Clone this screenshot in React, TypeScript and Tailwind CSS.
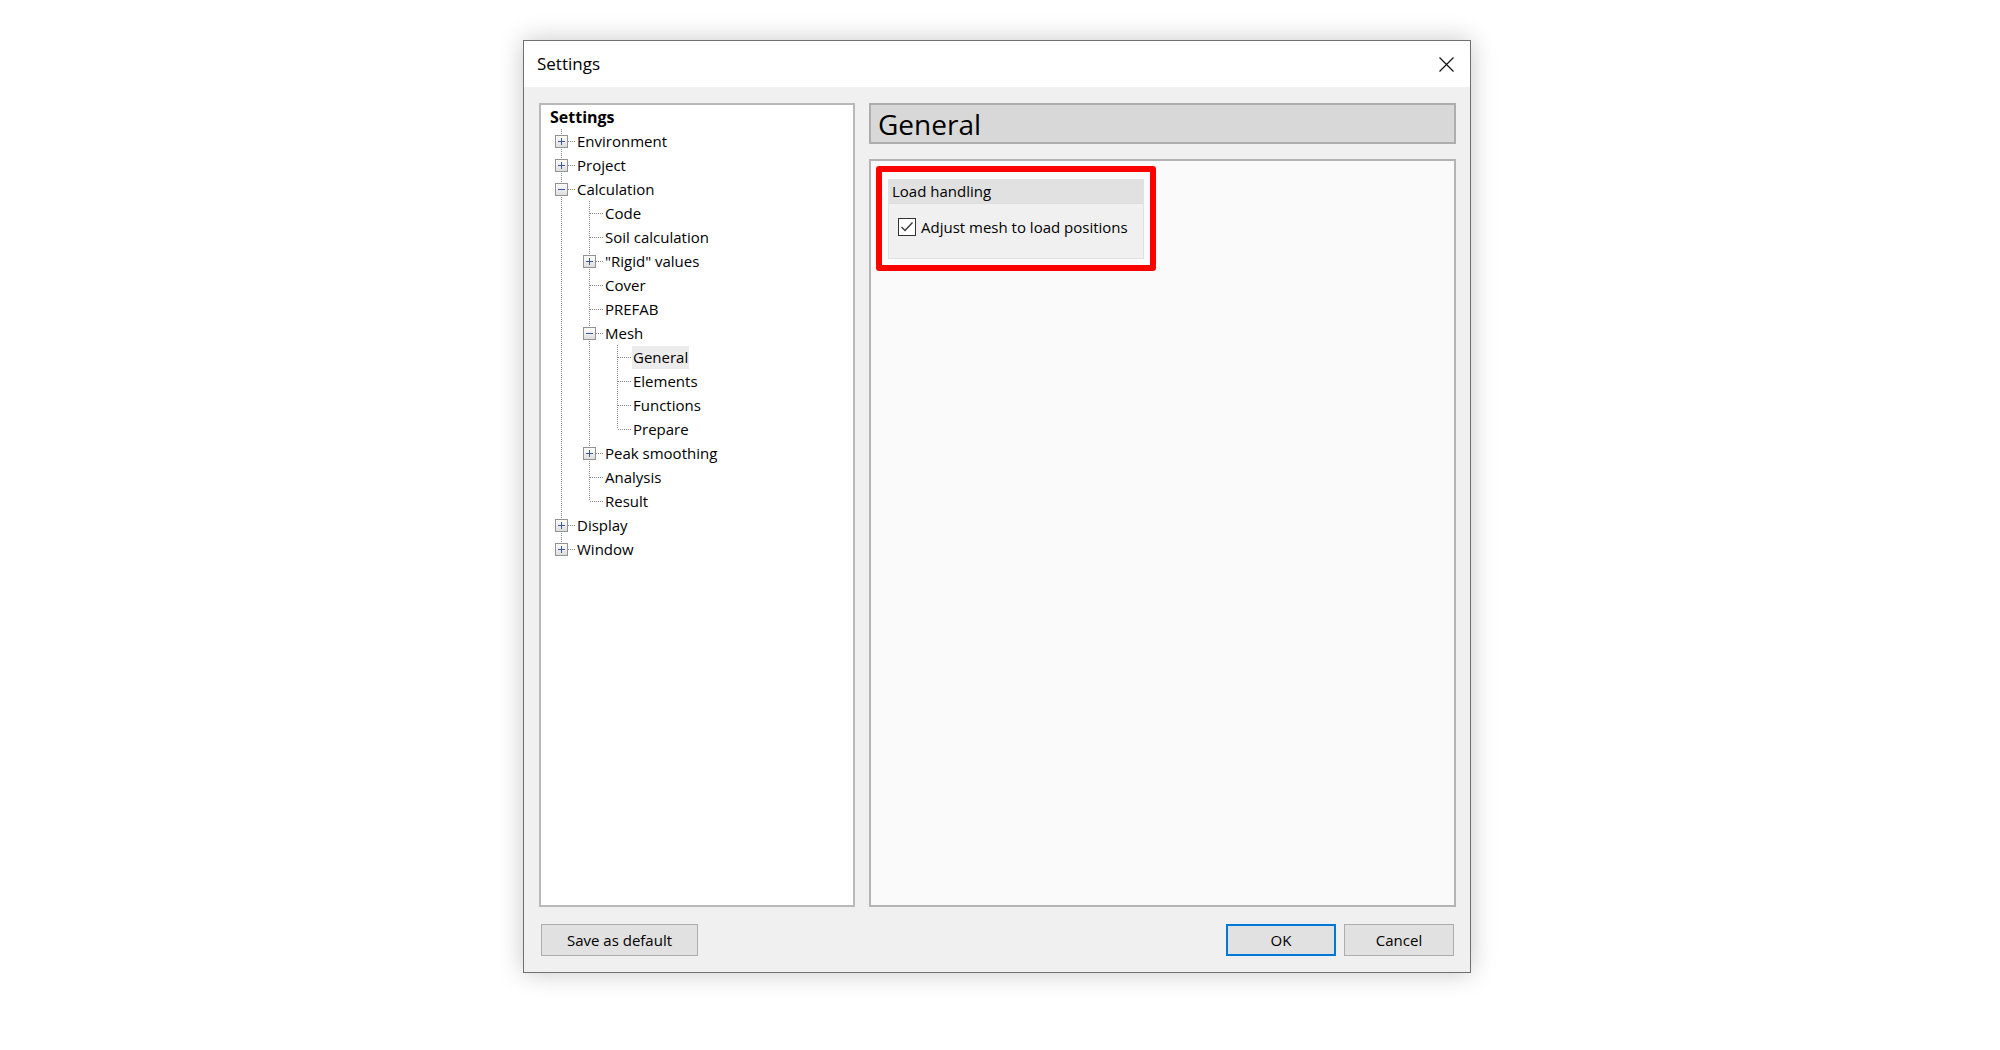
import React from "react";

type Node = {
  label: string;
  level: number;
  box?: "plus" | "minus";
  last?: boolean;
  anc: boolean[];
  selected?: boolean;
};

const tree: Node[] = [
  { label: "Environment", level: 1, box: "plus", anc: [] },
  { label: "Project", level: 1, box: "plus", anc: [] },
  { label: "Calculation", level: 1, box: "minus", anc: [] },
  { label: "Code", level: 2, anc: [true] },
  { label: "Soil calculation", level: 2, anc: [true] },
  { label: "\"Rigid\" values", level: 2, box: "plus", anc: [true] },
  { label: "Cover", level: 2, anc: [true] },
  { label: "PREFAB", level: 2, anc: [true] },
  { label: "Mesh", level: 2, box: "minus", anc: [true] },
  { label: "General", level: 3, anc: [true, true], selected: true },
  { label: "Elements", level: 3, anc: [true, true] },
  { label: "Functions", level: 3, anc: [true, true] },
  { label: "Prepare", level: 3, anc: [true, true], last: true },
  { label: "Peak smoothing", level: 2, box: "plus", anc: [true] },
  { label: "Analysis", level: 2, anc: [true] },
  { label: "Result", level: 2, anc: [true], last: true },
  { label: "Display", level: 1, box: "plus", anc: [] },
  { label: "Window", level: 1, box: "plus", last: true, anc: [] },
];

const dot = { stroke: "#8c8c8c", strokeWidth: 1, strokeDasharray: "1 1" };

const Guide = ({ on }: { on: boolean }) => (
  <svg width="28" height="24" className="shrink-0" shapeRendering="crispEdges">
    {on && <line x1="14.5" y1="0" x2="14.5" y2="24" style={dot} />}
  </svg>
);

const Branch = ({ box, last }: { box?: "plus" | "minus"; last?: boolean }) => (
  <svg width="28" height="24" className="shrink-0" shapeRendering="crispEdges">
    <defs>
      <linearGradient id="bx" x1="0" y1="0" x2="0" y2="1">
        <stop offset="0" stopColor="#ffffff" />
        <stop offset="1" stopColor="#dcdcdc" />
      </linearGradient>
    </defs>
    <line x1="14.5" y1="0" x2="14.5" y2={last ? 12 : 24} style={dot} />
    <line x1="15" y1="12.5" x2="28" y2="12.5" style={dot} />
    {box && (
      <>
        <rect x="8.5" y="6.5" width="12" height="12" fill="url(#bx)" stroke="#939393" />
        <line x1="11" y1="12.5" x2="18" y2="12.5" stroke="#3b5b98" strokeWidth="1" />
        {box === "plus" && <line x1="14.5" y1="9" x2="14.5" y2="16" stroke="#3b5b98" strokeWidth="1" />}
      </>
    )}
  </svg>
);

const TreeRow = ({ node }: { node: Node }) => (
  <div className="flex h-[24px] items-center">
    {node.anc.map((on, i) => (
      <Guide key={i} on={on} />
    ))}
    <Branch box={node.box} last={node.last} />
    <span
      className={`ml-[1px] px-[1px] h-[23px] leading-[22px] whitespace-nowrap ${
        node.selected ? "bg-[#ececec]" : ""
      }`}
    >
      {node.label}
    </span>
  </div>
);

const Button = ({ children, primary, className }: any) => (
  <button
    className={`h-[32px] bg-[#e1e1e1] text-[15px] text-black ${
      primary ? "border-2 border-[#0078d7]" : "border border-[#adadad]"
    } ${className}`}
  >
    {children}
  </button>
);

const App = () => {
  return (
    <div
      className="w-[2000px] h-[1050px] bg-white pl-[523px] pt-[40px] text-black"
      style={{ fontFamily: '"Open Sans", "Noto Sans", sans-serif' }}
    >
      <div className="w-[948px] h-[933px] flex flex-col border border-[#707070] bg-[#f0f0f0] shadow-[0_0_24px_rgba(0,0,0,0.22)]">
        {/* title bar */}
        <div className="h-[46px] shrink-0 bg-white flex items-center justify-between pl-[13px] pr-[16px]">
          <span className="text-[17px]">Settings</span>
          <svg width="15" height="15" viewBox="0 0 15 15">
            <path d="M0.5 0.5 L14.5 14.5 M14.5 0.5 L0.5 14.5" stroke="#111" strokeWidth="1.2" />
          </svg>
        </div>

        {/* body */}
        <div className="flex-1 flex flex-col pt-[16px] pl-[15px] pr-[14px] pb-[16px]">
          <div className="flex-1 flex gap-[14px] min-h-0">
            {/* tree */}
            <div className="w-[316px] border-2 border-[#b9b9b9] bg-white pl-[6px] text-[15px]">
              <div className="h-[24px] flex items-center pl-[3px] font-bold text-[16px]">Settings</div>
              {tree.map((n, i) => (
                <TreeRow key={i} node={n} />
              ))}
            </div>

            {/* right column */}
            <div className="flex-1 flex flex-col gap-[15px]">
              <div className="h-[41px] shrink-0 border-2 border-[#adadad] bg-[#d8d8d8] flex items-center pl-[7px]">
                <span className="text-[28px] leading-none">General</span>
              </div>
              <div className="flex-1 border-2 border-[#b4b4b4] bg-[#fafafa] pt-[5px] pl-[5px]">
                <div className="w-[280px] border-[6px] border-[#ff0000] rounded-[3px] px-[6px] pt-[7px] pb-[6px]">
                  <div className="border border-[#e2e2e2]">
                    <div className="h-[23px] bg-[#e1e1e1] flex items-center pl-[3px] text-[15px]">Load handling</div>
                    <div className="h-[55px] bg-[#f0f0f0] border-t border-[#dedede] flex items-start pt-[13px] pl-[9px]">
                      <div className="flex items-center gap-[5px]">
                        <svg width="18" height="18" viewBox="0 0 18 18" shapeRendering="geometricPrecision">
                          <rect x="0.5" y="0.5" width="17" height="17" fill="#ffffff" stroke="#333333" />
                          <path d="M3.5 9 L7 12.5 L14.5 4.5" fill="none" stroke="#3a3a3a" strokeWidth="1.4" />
                        </svg>
                        <span className="text-[15px] leading-[20px]">Adjust mesh to load positions</span>
                      </div>
                    </div>
                  </div>
                </div>
              </div>
            </div>
          </div>

          {/* buttons */}
          <div className="h-[32px] mt-[17px] shrink-0 flex items-center justify-between px-[2px]">
            <Button className="w-[157px]">Save as default</Button>
            <div className="flex gap-[8px]">
              <Button primary className="w-[110px]">OK</Button>
              <Button className="w-[110px]">Cancel</Button>
            </div>
          </div>
        </div>
      </div>
    </div>
  );
};

export default App;
